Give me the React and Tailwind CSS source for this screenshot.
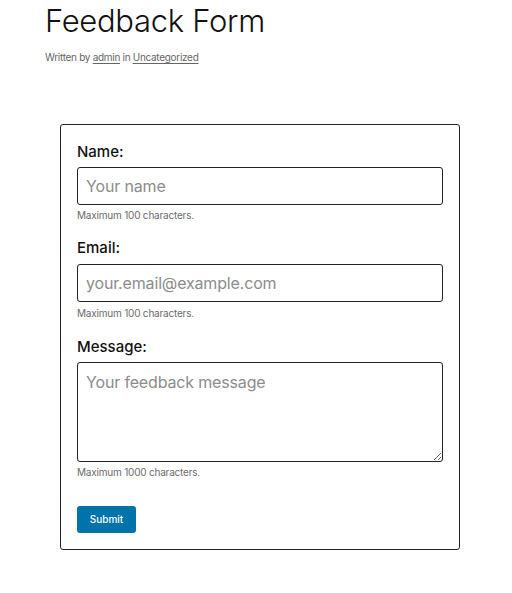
export default function App() {
  const font = { fontFamily: 'Inter, "Noto Sans", sans-serif' };
  return (
    <div className="w-[512px] min-h-[593px] bg-white text-[#111]" style={font}>
      <div className="pl-[45px] pt-[2px]">
        <h1 className="text-[31px] leading-[38px] font-light tracking-[-0.01em] text-[#111]">Feedback Form</h1>
        <p className="mt-[10px] text-[10px] leading-[14px] text-[#666] tracking-[-0.03em]">
          Written by <span className="underline underline-offset-2">admin</span> in{' '}
          <span className="underline underline-offset-2">Uncategorized</span>
        </p>
      </div>
      <form className="ml-[60px] mt-[60px] w-[400px] border border-[#222] rounded-[3px] px-[16px] pt-[17px] pb-[16px]">
        <label className="block text-[15px] leading-[20px] font-medium">Name:</label>
        <input
          type="text"
          placeholder="Your name"
          className="mt-[5px] block w-full h-[38px] border border-[#222] rounded-[3px] px-[8px] text-[16px] tracking-[-0.01em] placeholder:text-[#8c8c8c] outline-none"
        />
        <p className="mt-[3px] text-[10px] leading-[14px] text-[#6b6b6b] tracking-[-0.02em]">Maximum 100 characters.</p>

        <label className="mt-[16px] block text-[15px] leading-[20px] font-medium">Email:</label>
        <input
          type="email"
          placeholder="your.email@example.com"
          className="mt-[6px] block w-full h-[38px] border border-[#222] rounded-[3px] px-[8px] text-[16px] tracking-[-0.01em] placeholder:text-[#8c8c8c] outline-none"
        />
        <p className="mt-[4px] text-[10px] leading-[14px] text-[#6b6b6b] tracking-[-0.02em]">Maximum 100 characters.</p>

        <label className="mt-[17px] block text-[15px] leading-[20px] font-medium">Message:</label>
        <textarea
          placeholder="Your feedback message"
          className="mt-[5px] block w-full h-[100px] border border-[#222] rounded-[3px] px-[8px] py-[8px] text-[16px] leading-[22px] tracking-[-0.01em] placeholder:text-[#8c8c8c] outline-none"
        />
        <p className="mt-[3px] text-[10px] leading-[14px] text-[#6b6b6b] tracking-[-0.02em]">Maximum 1000 characters.</p>

        <button
          type="button"
          className="mt-[27px] block w-[59px] h-[27px] bg-[#0073aa] text-white text-[10px] font-medium rounded-[3px]"
        >
          Submit
        </button>
      </form>
    </div>
  );
}
